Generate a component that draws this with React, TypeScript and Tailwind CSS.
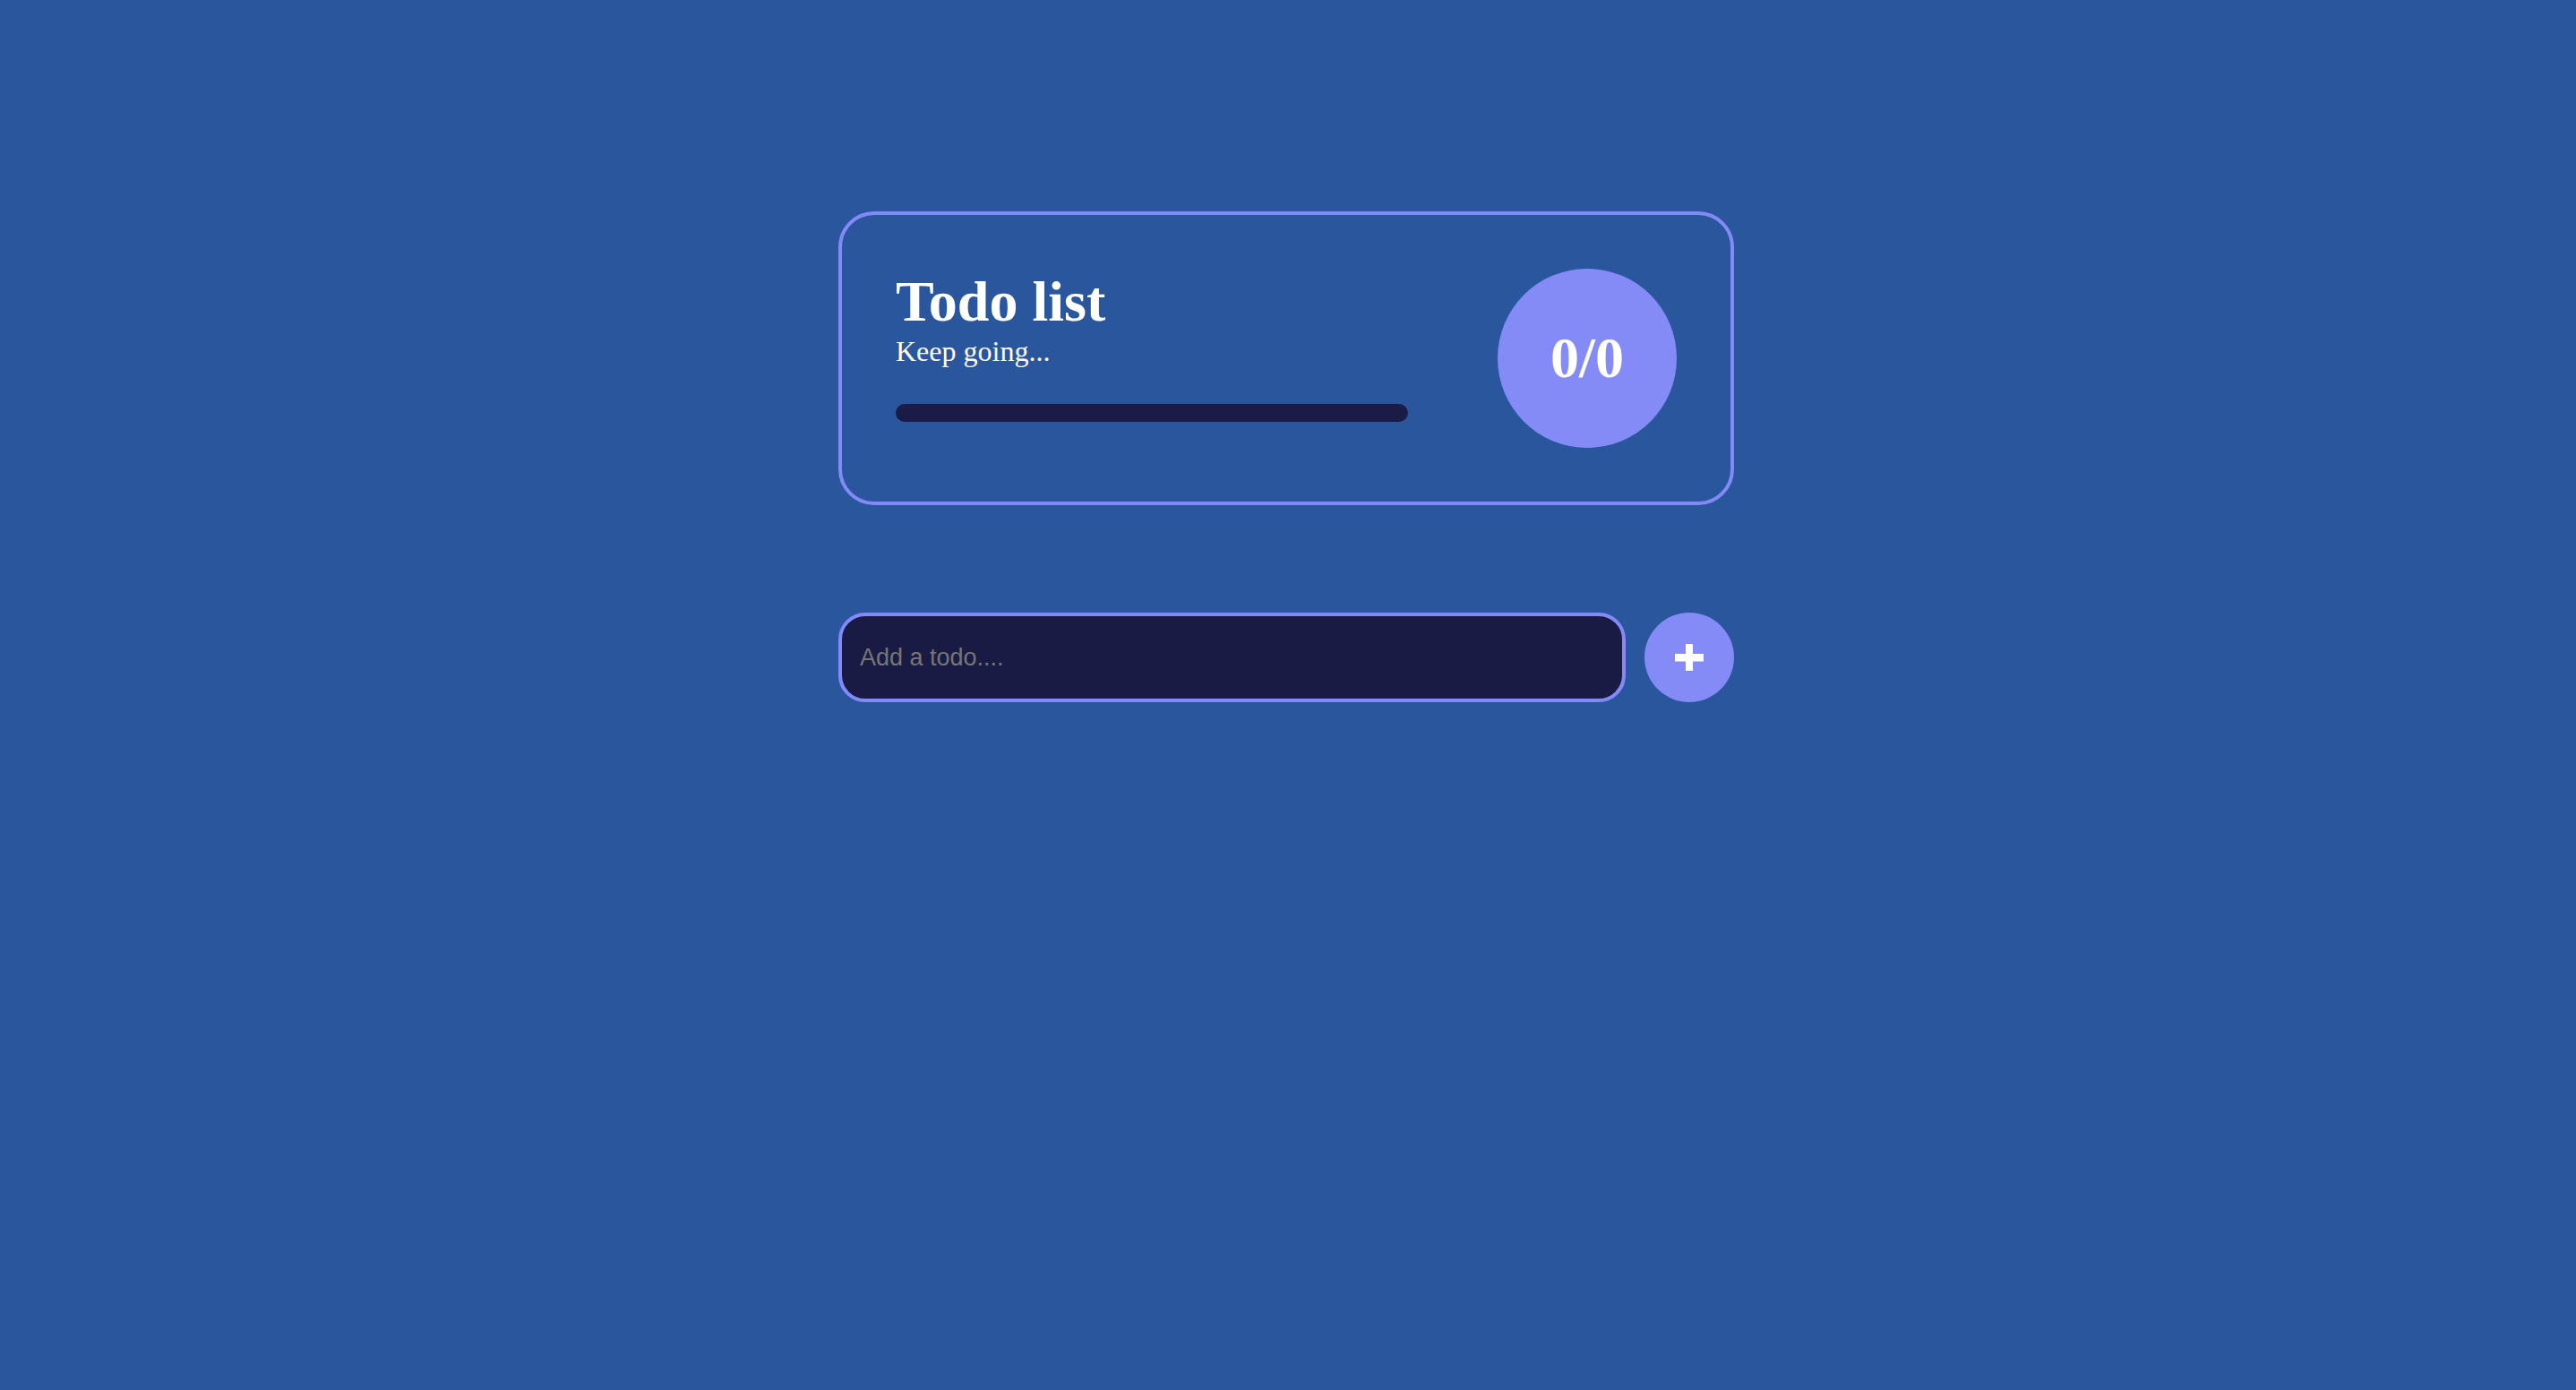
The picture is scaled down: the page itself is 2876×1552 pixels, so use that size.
import { useState } from "react";

export default function App() {
  const [todos, setTodos] = useState<{ id: number; text: string; done: boolean }[]>([]);
  const [text, setText] = useState("");

  const done = todos.filter(t => t.done).length;
  const pct = todos.length ? (done / todos.length) * 100 : 0;

  const addTodo = () => {
    if (!text.trim()) return;
    setTodos([...todos, { id: Date.now(), text: text.trim(), done: false }]);
    setText("");
  };

  return (
    <div className="flex min-h-screen w-full justify-center bg-[#2a569e] pr-[4px] pt-[236px] font-['Liberation_Serif',serif] text-white">
      <div className="w-[1000px]">
        {/* stats card */}
        <div className="flex items-start justify-between rounded-[40px] border-4 border-[#838af7] p-[60px]">
          <div className="flex flex-col">
            <h1 className="text-[64px] font-bold leading-[1.15]">Todo list</h1>
            <p className="text-[32px] leading-[1.15]">Keep going...</p>
            <div className="mt-[41px] h-5 w-[572px] overflow-hidden rounded-full bg-[#1a1b46]">
              <div className="h-full rounded-full bg-[#838af7]" style={{ width: `${pct}%` }} />
            </div>
          </div>
          <div className="flex h-[200px] w-[200px] items-center justify-center rounded-full bg-[#848bf7]">
            <span className="text-[64px] font-bold leading-none">{done}/{todos.length}</span>
          </div>
        </div>

        {/* add form */}
        <div className="mt-[120px] flex items-center gap-[21px]">
          <input
            value={text}
            onChange={e => setText(e.target.value)}
            onKeyDown={e => e.key === "Enter" && addTodo()}
            placeholder="Add a todo...."
            className="h-[100px] flex-1 rounded-[30px] border-4 border-[#838af7] bg-[#191b45] px-5 font-['Liberation_Sans',Arial,sans-serif] text-[27px] text-white outline-none placeholder:text-[#767676]"
          />
          <button
            onClick={addTodo}
            className="flex h-[100px] w-[100px] shrink-0 items-center justify-center rounded-full bg-[#848bf7]"
          >
            <svg width="32" height="32" viewBox="0 0 32 32" fill="white">
              <rect x="12" y="1" width="8" height="30" />
              <rect x="0" y="12" width="32" height="8.5" />
            </svg>
          </button>
        </div>

        <ul className="mt-10 flex flex-col gap-4">
          {todos.map(t => (
            <li key={t.id} className="rounded-[30px] border-4 border-[#838af7] px-5 py-4 text-[27px]">
              {t.text}
            </li>
          ))}
        </ul>
      </div>
    </div>
  );
}
